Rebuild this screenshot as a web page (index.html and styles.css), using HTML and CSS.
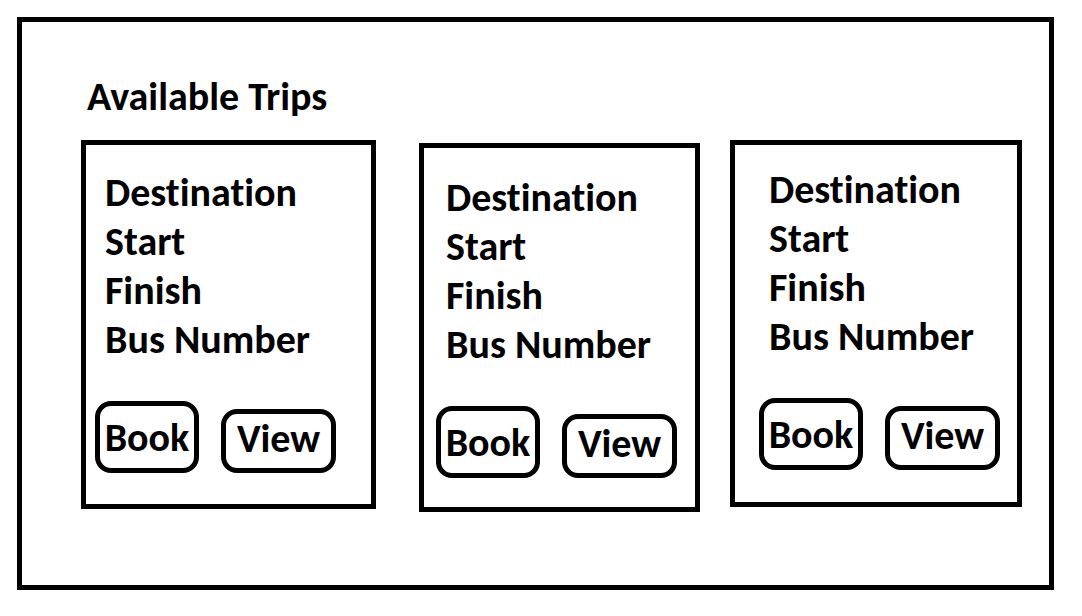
FILE: index.html
```html
<!DOCTYPE html>
<html lang="en">
<head>
<meta charset="utf-8">
<meta name="viewport" content="width=device-width, initial-scale=1">
<title>Available Trips</title>
<link rel="stylesheet" href="styles.css">
</head>
<body>
<main class="frame">
  <h1 class="title">Available Trips</h1>
  <div class="trips">
    <article class="trip trip-first">
      <ul class="details"><li>Destination</li><li>Start</li><li>Finish</li><li>Bus Number</li></ul>
      <div class="actions"><button class="button book" type="button">Book</button><button class="button view" type="button">View</button></div>
    </article>
    <article class="trip trip-second">
      <ul class="details"><li>Destination</li><li>Start</li><li>Finish</li><li>Bus Number</li></ul>
      <div class="actions"><button class="button book" type="button">Book</button><button class="button view" type="button">View</button></div>
    </article>
    <article class="trip trip-third">
      <ul class="details"><li>Destination</li><li>Start</li><li>Finish</li><li>Bus Number</li></ul>
      <div class="actions"><button class="button book" type="button">Book</button><button class="button view" type="button">View</button></div>
    </article>
  </div>
</main>
</body>
</html>
```

FILE: styles.css
```css
* {
  box-sizing: border-box;
}

body {
  margin: 0;
  padding: 17px 28px 26px 17px;
  background: #fff;
  color: #000;
  font: bold 40px/49px Carlito, Calibri, Lato, sans-serif;
  font-variant-ligatures: none;
}

.frame {
  border: 5px solid #000;
  padding: 50px 27px 73px 59px;
}

.title {
  margin: 0 0 19px;
  padding-left: 6px;
  font-size: inherit;
}

.trips {
  display: flex;
  align-items: flex-start;
}

.trip {
  border: 5px solid #000;
}

.trip-first {
  flex: 1 1 295px;
  padding: 23px 0 31px 9px;
}

.trip-second {
  flex: 1 1 281px;
  margin: 3px 30px 0 43px;
  padding: 25px 0 29px 12px;
}

.trip-third {
  flex: 1 1 292px;
  padding: 20px 0 32px 24px;
}

.details {
  margin: 0 0 37px;
  padding: 0 0 0 10px;
  list-style: none;
}

.actions {
  display: flex;
  align-items: flex-end;
  gap: 22px;
}

.button {
  flex: none;
  border: 5px solid #000;
  border-radius: 16px;
  background: #fff;
  color: inherit;
  font: inherit;
  white-space: nowrap;
  cursor: pointer;
}

.book {
  width: 104px;
  height: 72px;
  padding: 0;
}

.view {
  width: 115px;
  height: 64px;
  padding: 0 0 7px;
}
```
